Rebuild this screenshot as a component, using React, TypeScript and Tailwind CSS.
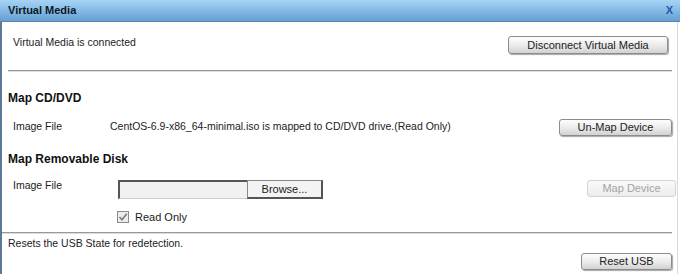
import React from 'react';

const btn =
  'rounded-[3px] border border-[#8c8c8c] bg-gradient-to-b from-[#fdfdfd] via-[#ececec] to-[#d2d2d2] text-[11px] leading-none text-[#222] shadow-[1px_1px_1px_rgba(0,0,0,0.35)]';

const Divider: React.FC<{ className?: string }> = ({ className = '' }) => (
  <div className={`h-[2px] shrink-0 border-t border-[#9a9a9a] border-b border-b-[#dcdcdc] ${className}`} />
);

const App: React.FC = () => {
  return (
    <div className="w-[680px] h-[274px] bg-white overflow-hidden flex flex-col text-[10.5px] text-[#222] font-['Liberation_Sans',Arial,sans-serif]">
      <header className="h-[22px] shrink-0 flex items-center justify-between pl-[8px] pr-[7px] bg-gradient-to-b from-[#a6d4f6] to-[#659fd2] border-b border-[#5a86b0]">
        <span className="font-bold text-[11px] text-[#0d1a26]">Virtual Media</span>
        <span className="font-bold text-[11px] text-[#1d5aa8]">X</span>
      </header>

      <div className="flex-1 flex flex-col border-l-2 border-[#5b7896] border-r border-r-[#d8d8d8] mr-[2px]">
        <div className="flex justify-between items-start mt-[13px] pl-[11px] pr-[9px]">
          <span className="leading-[14px]">Virtual Media is connected</span>
          <button className={`${btn} h-[18px] w-[160px] mt-[1px]`}>Disconnect Virtual Media</button>
        </div>

        <Divider className="mt-[16px] ml-[6px] mr-[5px]" />

        <h2 className="mt-[18px] ml-[6px] font-bold text-[12px] leading-[16px] text-[#111]">Map CD/DVD</h2>

        <div className="flex items-start mt-[13px] pl-[11px] pr-[5px]">
          <span className="w-[97px] leading-[14px]">Image File</span>
          <span className="flex-1 leading-[14px]">CentOS-6.9-x86_64-minimal.iso is mapped to CD/DVD drive.(Read Only)</span>
          <button className={`${btn} h-[17px] w-[113px]`}>Un-Map Device</button>
        </div>

        <h2 className="mt-[15px] ml-[6px] font-bold text-[12px] leading-[16px] text-[#111]">Map Removable Disk</h2>

        <div className="flex items-start mt-[11px] pl-[11px] pr-[1px]">
          <span className="w-[105px] leading-[14px]">Image File</span>
          <div className="flex h-[19px] w-[205px] mt-[2px]">
            <div className="w-[129px] h-full bg-[#f1f1f1] border-t-2 border-l-2 border-[#555] border-b border-b-[#ccc]" />
            <div className="flex-1 h-full flex items-center justify-center bg-[#f3f3f3] border border-[#888] border-r-2 border-b-2 border-r-[#555] border-b-[#555] text-[11px]">
              Browse...
            </div>
          </div>
          <div className="flex-1" />
          <button className="h-[17px] w-[89px] mt-[2px] rounded-[3px] border border-[#d4d4d4] bg-gradient-to-b from-[#fafafa] to-[#ececec] text-[11px] leading-none text-[#a3a3a3]">
            Map Device
          </button>
        </div>

        <label className="flex items-center h-[12px] mt-[12px] ml-[115px]">
          <span className="w-[12px] h-[12px] border border-[#8a8a8a] bg-[#ececec] flex items-center justify-center">
            <svg width="10" height="10" viewBox="0 0 10 10">
              <path d="M1.5 5 L4 7.8 L8.8 1.8" fill="none" stroke="#7a7a7a" strokeWidth="1.6" />
            </svg>
          </span>
          <span className="ml-[6px] text-[11px]">Read Only</span>
        </label>

        <Divider className="mt-[9px] mr-[5px]" />

        <div className="mt-[2px] ml-[6px] leading-[14px]">Resets the USB State for redetection.</div>

        <div className="flex justify-end pr-[5px] mt-[3px]">
          <button className={`${btn} w-[91px] h-[17px]`}>Reset USB</button>
        </div>
      </div>
    </div>
  );
};

export default App;
